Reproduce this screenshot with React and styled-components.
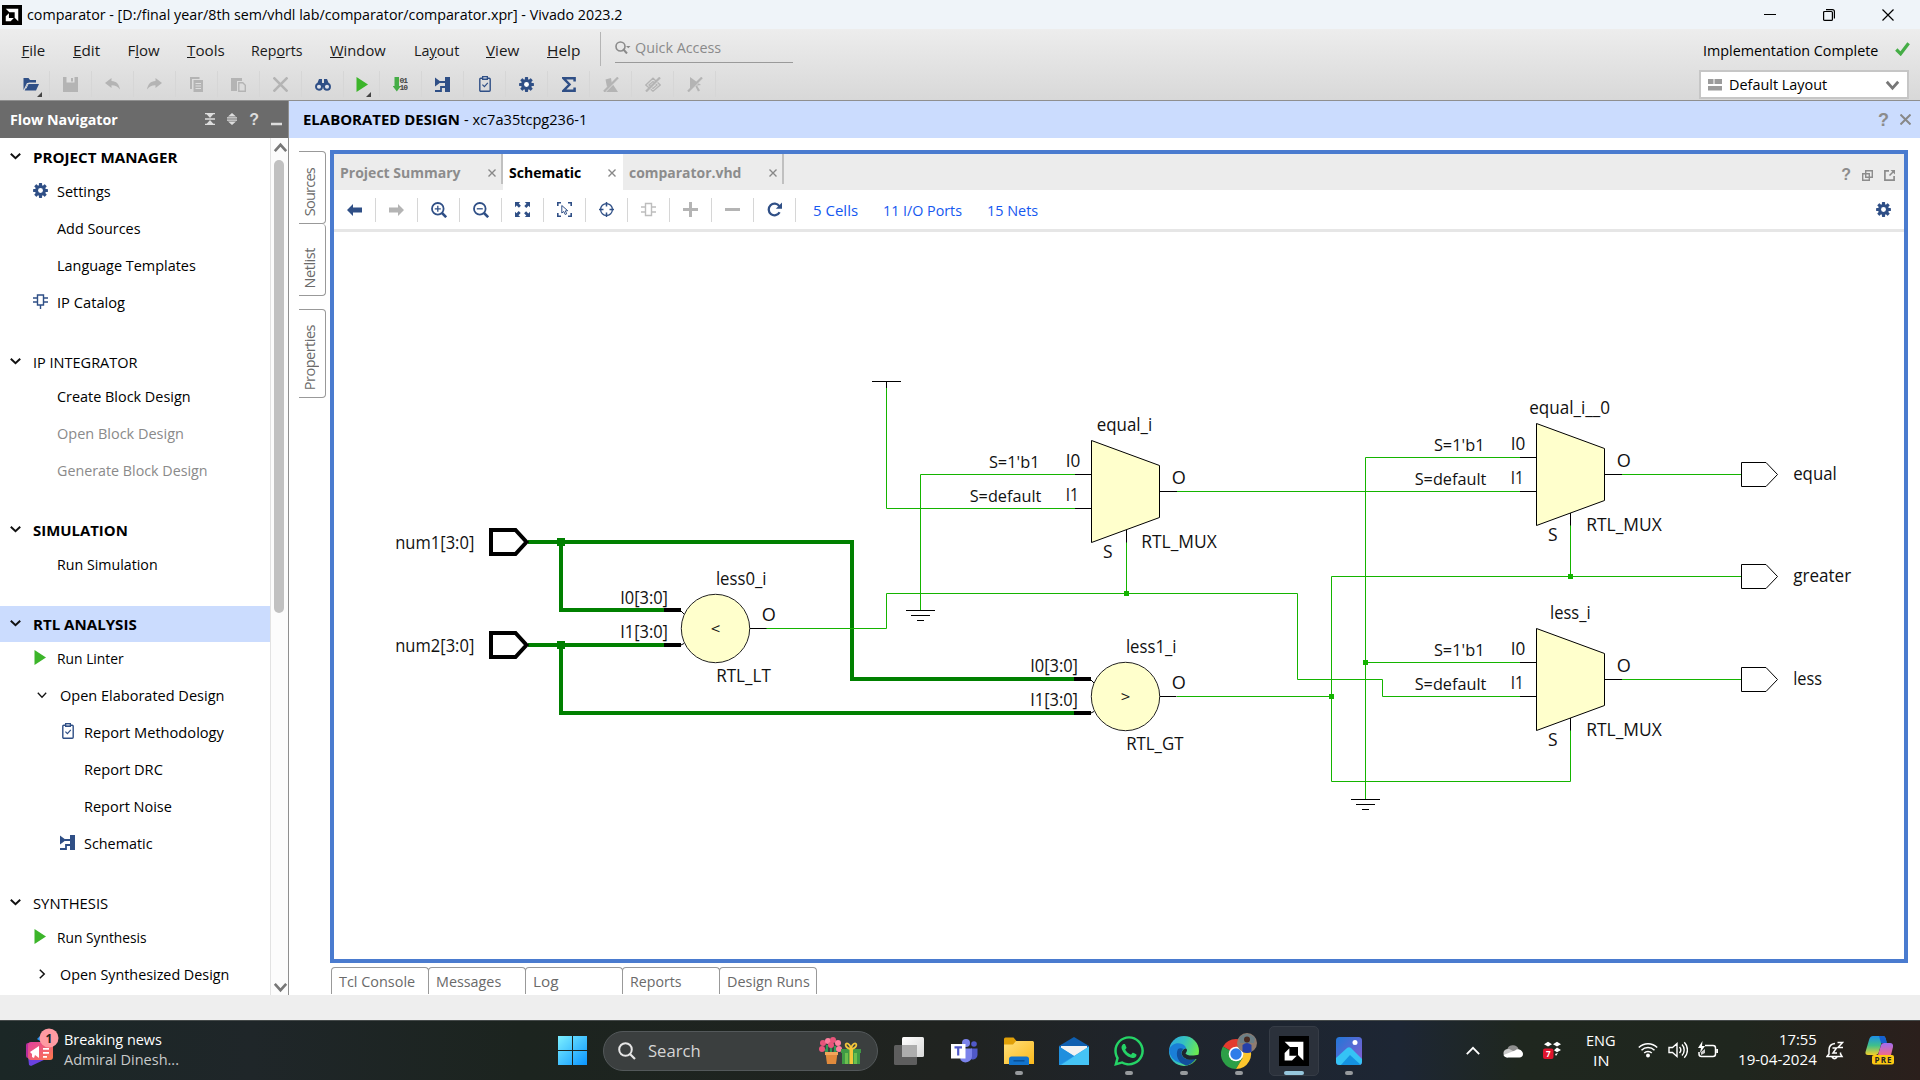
import React, { useLayoutEffect, useRef, useState } from "react";
import styled, { createGlobalStyle, css } from "styled-components";
import { FaWhatsapp } from "react-icons/fa";

const NAVY = "#2f4f86";
const OFF = "#b4b4b4";

const GlobalStyle = createGlobalStyle`
  * { box-sizing: border-box; }
  body {
    margin: 0;
    background: #fff;
    color: #000;
    font: 15px/20px "Open Sans", "Noto Sans", sans-serif;
    overflow: hidden;
  }
  svg { display: block; flex: none; }
`;

/* ---------- text that keeps a fixed advance width ---------- */

const FitBox = styled.span`
  display: inline-block;
  flex: none;
  width: ${(p) => p.$w}px;
  white-space: nowrap;
`;
const FitInner = styled.span`
  display: inline-block;
  transform-origin: 0 50%;
`;

function Fit({ w, dy = -1, children }) {
  const ref = useRef(null);
  const [scale, setScale] = useState(1);
  useLayoutEffect(() => {
    setScale(w / ref.current.offsetWidth);
  }, [w]);
  return (
    <FitBox $w={w}>
      <FitInner ref={ref} style={{ transform: `translateY(${dy}px) scaleX(${scale})` }}>
        {children}
      </FitInner>
    </FitBox>
  );
}

/* ---------- icons ---------- */

const Svg = ({ w = 15, h = w, box, children, ...p }) => (
  <svg width={w} height={h} viewBox={box || `0 0 ${w} ${h}`} {...p}>
    {children}
  </svg>
);

const AmdLogo = ({ size, bg = "#000" }) => (
  <Svg w={size} box="0 0 24 24">
    <path d="M0 0h24v24H0z" fill={bg} />
    <path d="M4.5 4.5h15v15l-4.3-4.3V8.8H8.8zM8.3 9.8v5.9h5.9l-3.8 3.8H4.5v-5.9z" fill="#fff" />
  </Svg>
);
const Gear = () => (
  <Svg box="-8 -8 16 16">
    {[0, 45, 90, 135].map((a) => (
      <rect key={a} x="-1.7" y="-7.9" width="3.4" height="15.8" rx=".6" fill={NAVY} transform={`rotate(${a})`} />
    ))}
    <circle r="4.2" fill="none" stroke={NAVY} strokeWidth="3.2" />
    <circle r="2.6" fill="#fff" />
  </Svg>
);
const Play = ({ w = 12, h = 15 }) => (
  <Svg w={w} h={h} box="0 0 12 15">
    <path d="M.5 0 12 7.5.5 15z" fill="#3cb52a" />
  </Svg>
);
const CHEVRONS = {
  down: (w, h) => `M.8 .8 L${w / 2} ${h - 0.8} L${w - 0.8} .8`,
  up: (w, h) => `M.8 ${h - 0.8} L${w / 2} .8 L${w - 0.8} ${h - 0.8}`,
  right: (w, h) => `M.8 .8 L${w - 0.8} ${h / 2} L.8 ${h - 0.8}`,
};
const Chevron = ({ dir = "down", w = 11, h = 6, c = "#111", sw = 2 }) => (
  <Svg w={w} h={h} overflow="visible">
    <path d={CHEVRONS[dir](w, h)} fill="none" stroke={c} strokeWidth={sw} />
  </Svg>
);
const Clipboard = () => (
  <Svg w={12} h={16}>
    <rect x=".8" y="2.3" width="10.4" height="12.9" rx="1" fill="none" stroke={NAVY} strokeWidth="1.4" />
    <path d="M3 0h6v4H3z" fill={NAVY} />
    <path d="M4.3 1.4h3.4v1H4.3z" fill="#fff" />
    <path d="M3.4 8.6 5.4 10.6 8.8 6.8" fill="none" stroke={NAVY} strokeWidth="1.2" />
  </Svg>
);
const SchematicIcon = () => (
  <Svg w={15} h={15}>
    <path d="M0 .5l6 4.5L0 9.500z M10 0h5v15h-5z" fill={NAVY} />
    <path d="M5 5h6M10 10H6v4H0" fill="none" stroke={NAVY} strokeWidth="1.8" />
  </Svg>
);
const IpChip = ({ c = NAVY, stem = true }) => (
  <Svg w={15} h={15}>
    <path d={`M4.500 ${stem ? "1h6v10h-6z" : "1.500h6v12h-6z"}M0 ${stem ? 4 : 5}h4M0 ${stem ? 8 : 10}h4M11 ${stem ? 4 : 5}h4M11 ${stem ? 8 : 10}h4${stem ? "M7.500 11v4" : ""}`} fill="none" stroke={c} strokeWidth="1.4" />
  </Svg>
);
const Cross = ({ s = 8, c = "#888", sw = 1.4 }) => (
  <Svg w={s}>
    <path d={`M.5 .5L${s - 0.5} ${s - 0.5}M${s - 0.5} .5L.5 ${s - 0.5}`} stroke={c} strokeWidth={sw} />
  </Svg>
);
const Check = () => (
  <Svg w={15} h={14}>
    <path d="M1.300 7.500 5.600 11.800 13.600 1.300" fill="none" stroke="#45ad46" strokeWidth="3.2" />
  </Svg>
);
const OpenFolder = () => (
  <Svg w={16} h={16}>
    <path d="M.500 14V2h5l1.500 2h6v3H4z" fill={NAVY} />
    <path d="M4.600 8H16l-3 6.500H1.700z" fill={NAVY} />
    <path d="M3 12.500 5.500 7H14" fill="none" stroke="#e0e0e0" strokeWidth=".9" />
  </Svg>
);
const Save = () => (
  <Svg w={15}>
    <path d="M0 0h15v15H0z" fill={OFF} />
    <path d="M3.500 0h8v5.500h-8z" fill="#e0e0e0" />
    <path d="M8 1h2v3.500H8z" fill={OFF} />
  </Svg>
);
const Undo = ({ flip }) => (
  <Svg w={15} h={12} transform={flip ? "scale(-1 1)" : undefined}>
    <path d="M0 5 6.500 0v3c5 .3 7.500 3 8.500 8.500C12.500 8.500 10.500 7.300 6.500 7.300V10z" fill={OFF} />
  </Svg>
);
const Copy = () => (
  <Svg w={15}>
    <path d="M1 0h9.500v2H3v10H1z" fill={OFF} />
    <path d="M4.500 3H14v12H4.500z" fill={OFF} />
    <path d="M6.500 6.500h5.500M6.500 9h5.500M6.500 11.500h5.500" stroke="#dedede" />
  </Svg>
);
const Paste = () => (
  <Svg w={15}>
    <path d="M0 1h11v3H6v10H0z" fill={OFF} />
    <path d="M7.800 5.800h4l2.500 2.500v6h-6.500z" fill="#dcdcdc" stroke={OFF} strokeWidth="1.4" />
  </Svg>
);
const Binoculars = () => (
  <Svg w={16} h={13}>
    <path d="M2 6 4 1h3v4h2V1h3l2 5z" fill={NAVY} />
    <circle cx="4" cy="8.800" r="3" fill="#dde1ea" stroke={NAVY} strokeWidth="1.9" />
    <circle cx="12" cy="8.800" r="3" fill="#dde1ea" stroke={NAVY} strokeWidth="1.9" />
    <path d="M7 5h2v4H7z" fill={NAVY} />
  </Svg>
);
const BitStyle = styled.text`
  font: bold 8px "Liberation Mono", monospace;
  fill: #444;
`;
const Bitstream = () => (
  <Svg w={15} h={16}>
    <path d="M1.500 1h4.500v9h2L3.800 15.500-.400 10h1.900z" fill="#45ad46" />
    <BitStyle x="6.500" y="7" textLength="8.500">01</BitStyle>
    <BitStyle x="6.500" y="14" textLength="8.500">10</BitStyle>
  </Svg>
);
const Sigma = () => (
  <Svg w={14} h={15}>
    <path d="M12.600 4.500V1.300H1.500L7.500 7.500 1.500 13.700h11.100V10.500" fill="none" stroke={NAVY} strokeWidth="2.500" />
  </Svg>
);
const Slashed = ({ kind }) => (
  <Svg w={16} h={15}>
    {kind === 0 && <path d="M.5 15 10 7.500 15 15zM2.500 2.500 8 1l1 6-5 3z" fill={OFF} />}
    {kind === 1 && <path d="M.8 8 8 1.200 15.200 8 8 14.200zM4 8l4-3.500L12 8l-4 3.500z" fill="none" stroke={OFF} strokeWidth="1.300" />}
    {kind === 2 && <path d="M3 0l11 8-4 .6 3 5-2 1-2.500-5L3 13z" fill={OFF} />}
    <path d="M2.500 14.500 15.500 1.500" stroke="#dadada" strokeWidth="1.500" />
    <path d="M1 14.500 15 .5" stroke={OFF} strokeWidth="2.200" />
  </Svg>
);
const LayoutIcon = () => (
  <Svg w={14} h={12}>
    <path d="M0 0h5.500v5H0zM6.500 0H14v5H6.500zM0 7h14v4.500H0z" fill="#9b9b9b" />
  </Svg>
);
const Arrow = ({ c, flip }) => (
  <Svg w={15} h={12} transform={flip ? "scale(-1 1)" : undefined}>
    <path d="M0 6 6 0v3.500h9v5H6V12z" fill={c} />
  </Svg>
);
const Zoom = ({ plus }) => (
  <Svg w={16}>
    <circle cx="6.800" cy="6.800" r="5.800" fill="none" stroke={NAVY} strokeWidth="1.800" />
    <path d={`M3.800 6.800h6${plus ? "M6.800 3.800v6" : ""}`} stroke={NAVY} strokeWidth="1.300" />
    <path d="M11 11l4.200 4.200" stroke={NAVY} strokeWidth="2.600" />
  </Svg>
);
const FitAll = () => (
  <Svg w={15} h={15}>
    {[0, 90, 180, 270].map((a) => (
      <path key={a} d="M0 0h5.200L3.700 1.500l2.200 2.200-2 2-2.200-2.200L0 5.200z" fill={NAVY} transform={`rotate(${a} 7.500 7.500)`} />
    ))}
  </Svg>
);
const FitSel = () => (
  <Svg w={15} h={15}>
    <path d="M.800 4V.800H4M11 .800h3.200V4M14.200 11v3.200H11M4 14.200H.800V11" fill="none" stroke={NAVY} strokeWidth="1.600" />
    <path d="M4.800 3.500v7.500l2-1.500 1.400 3 1.500-.7-1.400-2.900 2.400-.2z" fill="none" stroke={NAVY} />
  </Svg>
);
const Target = () => (
  <Svg w={15} h={15}>
    <circle cx="7.500" cy="7.500" r="5.900" fill="none" stroke={NAVY} strokeWidth="1.300" />
    <path d="M7.500 0v4.500M7.500 10.500V15M0 7.500h4.500M10.500 7.500H15" stroke={NAVY} strokeWidth="1.500" />
  </Svg>
);
const Plus = ({ minus }) => (
  <Svg w={15} h={15}>
    <path d={`M0 7.500h15${minus ? "" : "M7.500 0v15"}`} stroke={OFF} strokeWidth="3" />
  </Svg>
);
const Refresh = () => (
  <Svg w={15} h={15}>
    <path d="M12.300 4.200A5.800 5.800 0 1 0 12.600 10.300" fill="none" stroke={NAVY} strokeWidth="2.300" />
    <path d="M15 .500v6.200H8.800z" fill={NAVY} />
  </Svg>
);

/* ---------- window chrome ---------- */

const Screen = styled.div`
  width: 1920px;
  height: 1080px;
  display: flex;
  flex-direction: column;
  overflow: hidden;
`;
const TitleBar = styled.header`
  height: 29px;
  flex: none;
  display: flex;
  align-items: center;
  padding: 0 26px 0 2px;
  background: #eff4f9;
  gap: 5px;
`;
const WindowButtons = styled.div`
  margin-left: auto;
  display: flex;
  align-items: center;
  gap: 47px;
`;
const TopBars = styled.div`
  height: 72px;
  flex: none;
  display: flex;
  justify-content: space-between;
  background: linear-gradient(#ededed, #d8d8d8);
  border-bottom: 1px solid #8f8f8f;
`;
const Column = styled.div`
  display: flex;
  flex-direction: column;
`;
const MenuRow = styled.nav`
  height: 38px;
  display: flex;
  padding: 3px 0 0 21.500px;
`;
const MenuItems = styled.div`
  display: flex;
  align-items: center;
  padding-top: 4px;
  gap: 27.200px;
  width: 578.500px;
  color: #1a1a1a;
`;
const QuickAccess = styled.div`
  height: 34px;
  padding: 0 0 3px 14px;
  border-left: 1px solid #b5b5b5;
`;
const QuickField = styled.div`
  width: 178px;
  height: 31px;
  display: flex;
  align-items: center;
  gap: 4px;
  color: #8a8a8a;
  border-bottom: 1px solid #9a9a9a;
`;
const ToolRow = styled.div`
  display: flex;
  padding-left: 8px;
`;
const ToolCell = styled.div`
  width: ${(p) => (p.$narrow ? 36 : 42)}px;
  height: 26px;
  margin-top: 4px;
  padding-left: ${(p) => (p.$first ? 4 : 0)}px;
  display: flex;
  align-items: center;
  justify-content: center;
  border-right: 1px solid #d6d6d6;
  position: relative;
`;
const Corner = styled.i`
  position: absolute;
  right: ${(p) => (p.$narrow ? 8 : 7)}px;
  bottom: 0;
  border-left: 5px solid transparent;
  border-bottom: 5px solid #444;
`;
const StatusColumn = styled.div`
  width: 221px;
  padding: 10px 10px 0 0;
`;
const StatusLine = styled.div`
  display: flex;
  align-items: center;
  justify-content: space-between;
  padding-left: 4px;
  height: 22px;
  > svg { margin-top: -3px; }
`;
const Combo = styled.div`
  height: 29px;
  margin: 9px 1px 0 0;
  width: 210px;
  border: 2px solid #c6c6c6;
  background: #fff;
  display: flex;
  align-items: center;
  padding: 0 8px 0 7px;
  gap: 7px;
  > :last-child { margin-left: auto; }
`;

/* ---------- body ---------- */

const Body = styled.div`
  flex: none;
  height: 894px;
  display: flex;
`;
const Sidebar = styled.aside`
  width: 289px;
  flex: none;
  border-right: 1px solid #8f8f8f;
  display: flex;
  flex-direction: column;
`;
const NavHead = styled.div`
  height: 37px;
  flex: none;
  background: #6b6b6b;
  color: #fff;
  font-weight: 700;
  display: flex;
  align-items: center;
  padding: 0 6px 0 10px;
`;
const NavTools = styled.div`
  margin-left: auto;
  display: flex;
  align-items: center;
  gap: 12px;
`;
const NavBody = styled.div`
  flex: 1;
  min-height: 0;
  display: flex;
`;
const Tree = styled.div`
  flex: 1;
  padding-top: 1px;
  overflow: hidden;
`;
const Group = styled.section`
  margin-bottom: 23px;
`;
const GroupHead = styled.div`
  height: 36px;
  display: flex;
  align-items: center;
  gap: 12px;
  padding: 1px 0 0 9.500px;
  font-weight: ${(p) => (p.$bold ? 700 : 400)};
  background: ${(p) => (p.$on ? "#cbdcfe" : "none")};
  > svg { margin-top: -4px; }
`;
const Items = styled.div`
  margin-top: -2px;
`;
const Item = styled.div`
  height: 37px;
  display: flex;
  align-items: center;
  color: ${(p) => (p.$off ? "#8a8a8a" : "#000")};
  padding-left: ${(p) => ({ 1: 33, 2: 37, 3: 60 })[p.$level]}px;
`;
const IconSlot = styled.span`
  width: ${(p) => (p.$level === 2 ? 22.500 : 23.500)}px;
  padding-left: ${(p) => p.$inset || 0}px;
  flex: none;
  display: flex;
  margin-top: ${(p) => (p.$level === 2 ? -1 : -3)}px;
`;
const ScrollTrack = styled.div`
  width: 18px;
  background: #fcfcfc;
  border-left: 1px solid #e2e2e2;
  display: flex;
  flex-direction: column;
  align-items: center;
  padding: 6px 0 4px 1px;
`;
const Thumb = styled.div`
  width: 10px;
  height: 453px;
  margin: 8px 2px auto 0;
  border-radius: 5px;
  background: #c1c1c1;
`;
const Main = styled.main`
  flex: 1;
  display: flex;
  flex-direction: column;
`;
const DesignHead = styled.div`
  height: 37px;
  flex: none;
  background: #cbdcfe;
  display: flex;
  align-items: center;
  padding: 0 9px 0 14px;
  gap: 4px;
  b { font-weight: 700; }
`;
const HeadTools = styled.div`
  margin-left: auto;
  display: flex;
  align-items: center;
  gap: 11px;
`;
const HelpMark = styled.span`
  font: bold ${(p) => p.$s || 18}px/20px "Liberation Sans", Arial, sans-serif;
  color: ${(p) => p.$c || "#8c8c8c"};
`;
const Workspace = styled.div`
  flex: 1;
  display: flex;
  padding: 12px 12px 0 10px;
`;
const SideTabs = styled.div`
  width: 31px;
  flex: none;
  padding: 1px 0 0;
`;
const SideTab = styled.div`
  width: 27px;
  height: ${(p) => p.$h}px;
  margin-bottom: ${(p) => p.$gap || 0}px;
  border: 1px solid #999;
  border-left: 0;
  border-radius: 0 4px 4px 0;
  ${(p) => p.$joined && css`border-top: 0;`}
  color: #6a6a6a;
  display: flex;
  align-items: flex-end;
  padding: 0 0 7px 0;
  font-size: 14.500px;
`;
const SideTabText = styled.span`
  writing-mode: vertical-rl;
  transform: rotate(180deg);
  line-height: 22px;
  letter-spacing: ${(p) => p.$ls}px;
`;
const Center = styled.div`
  flex: 1;
  display: flex;
  flex-direction: column;
`;
const Editor = styled.div`
  height: 813px;
  border: 4px solid #4a7bcf;
  display: flex;
  flex-direction: column;
`;
const TabStrip = styled.div`
  height: 36px;
  flex: none;
  background: #ececec;
  display: flex;
  align-items: flex-start;
`;
const Tab = styled.div`
  width: ${(p) => p.$w}px;
  height: ${(p) => (p.$on ? 36 : 30)}px;
  padding: 8px ${(p) => (p.$on ? 7 : 5)}px 0 6px;
  display: flex;
  justify-content: space-between;
  font-weight: 700;
  color: ${(p) => (p.$on ? "#000" : "#8c8c8c")};
  background: ${(p) => (p.$on ? "#fff" : "none")};
  border-right: ${(p) => (p.$sep ? "2px solid #c0c0c0" : "0")};
  > svg { margin-top: 7px; }
`;
const StripTools = styled.div`
  margin: 11px 9px 0 auto;
  display: flex;
  align-items: center;
  gap: 11px;
`;
const SchToolbar = styled.div`
  height: 42px;
  flex: none;
  border-bottom: 3px solid #e6e6e6;
  display: flex;
  align-items: center;
  padding-right: 13px;
  > :last-child { margin-left: auto; }
`;
const SchCell = styled.div`
  width: 42px;
  height: 24px;
  flex: none;
  display: flex;
  align-items: center;
  justify-content: center;
  border-right: 1px solid #d6d6d6;
`;
const Links = styled.div`
  display: flex;
  gap: 25px;
  padding: 3px 0 0 17px;
  color: #1558f0;
`;
const BottomTabs = styled.div`
  display: flex;
  margin: 4px 0 0 1px;
`;
const BottomTab = styled.div`
  width: 98px;
  height: 27px;
  margin-right: -1px;
  border: 1px solid #999;
  border-bottom: 0;
  border-radius: 4px 4px 0 0;
  padding: 4px 0 0 7px;
  color: #6a6a6a;
`;
const StatusStrip = styled.div`
  height: 25px;
  flex: none;
  background: #eee;
`;

/* ---------- schematic ---------- */

const SchText = styled.text`
  font: ${(p) => p.$s || 17.500}px "Open Sans", "Noto Sans", sans-serif;
  fill: #111;
`;
const T = ({ x, x2, y, s, children }) => (
  <SchText x={x - 0.8} y={y} $s={s} textLength={x2 - x + 1.6} lengthAdjust="spacingAndGlyphs">
    {children}
  </SchText>
);
const Bus = (p) => <path fill="none" stroke="#008000" strokeWidth="4" {...p} />;
const Wire = (p) => <path fill="none" stroke="#14b400" strokeWidth="1" {...p} />;
const Pin = (p) => <path fill="none" stroke="#000" strokeWidth="1" {...p} />;
const Dot = ({ x, y, s = 5, c = "#14b400" }) => <rect x={x - s / 2} y={y - s / 2} width={s} height={s} fill={c} />;

const Mux = ({ x, y, select, name, nx, nx2 }) => (
  <g>
    <path d={`M${x} ${y}l68 25v52l-68 25z`} fill="#ffffcc" stroke="#000" />
    <Pin d={`M${x - 16.500} ${y + 34}h16M${x - 16.500} ${y + 68}h16M${x + 68} ${y + 51}h17.500M${select} ${y + 89.500}v12.500`} />
    <T x={nx} x2={nx2} y={y - 9.500}>{name}</T>
    <T x={x - 101.800} x2={x - 52.800} y={y + 27.700} s={16.500}>S=1'b1</T>
    <T x={x - 121} x2={x - 51} y={y + 61.400} s={16.500}>S=default</T>
    <T x={x - 25} x2={x - 12} y={y + 26.500}>I0</T>
    <T x={x - 25} x2={x - 13.500} y={y + 60.800}>I1</T>
    <T x={x + 81} x2={x + 93.500} y={y + 43.700}>O</T>
    <T x={x + 12.200} x2={x + 20.200} y={y + 117.700}>S</T>
    <T x={x + 50.500} x2={x + 124.500} y={y + 107.700}>RTL_MUX</T>
  </g>
);
const Compare = ({ x, y, in1, name, type, sign, tx2 }) => (
  <g>
    <circle cx={x} cy={y} r="34.200" fill="#ffffcc" stroke="#222" />
    <Pin d={`M${x + 34.500} ${y}h16.500M${x - 34.500} ${in1 + 1}l3 3M${x - 34.500} ${y + 16.500}l3 -1.500`} />
    <T x={x + 1.200} x2={x + 50.300} y={y - 43.300}>{name}</T>
    <T x={x - 94.500} x2={x - 48.300} y={y - 24.800}>I0[3:0]</T>
    <T x={x - 94.500} x2={x - 48.300} y={y + 9.300}>I1[3:0]</T>
    <T x={x + 47} x2={x + 59.500} y={y - 7.400}>O</T>
    <T x={x + 1.500} x2={tx2} y={y + 53.600}>{type}</T>
    <T x={x - 4} x2={x + 4} y={y + 5} s={14}>{sign}</T>
  </g>
);
const Ground = ({ x, y }) => <Pin d={`M${x - 14.500} ${y}h29M${x - 9.500} ${y + 5}h19M${x - 3.500} ${y + 10}h7`} />;
const InPort = ({ y, name }) => (
  <g>
    <path d={`M491 ${y - 12}h24.500l11 12-11 12H491z`} fill="#fff" stroke="#000" strokeWidth="4" />
    <T x={396} x2={473.500} y={y + 6.600}>{name}</T>
  </g>
);
const OutPort = ({ y, x2, name }) => (
  <g>
    <path d={`M1741.500 ${y - 12}h24.500l11.500 12-11.500 12h-24.500z`} fill="#fff" stroke="#000" />
    <T x={1794} x2={x2} y={y + 5.800}>{name}</T>
  </g>
);

const Schematic = () => (
  <svg width="1570" height="727" viewBox="334 232 1570 727">
    <Bus d="M528 542H852V679H1074M561 542V610H664M528 645H664M561 645V713H1074" />
    <Dot x={561} y={542} s={8} c="#008000" />
    <Dot x={561} y={645} s={8} c="#008000" />
    <path d="M664 610h17M664 645h17M1074 679h17M1074 713h17" stroke="#000" strokeWidth="4" />
    <Wire d="M766 628.500H886.500V593.500H1297.500V679.500H1382.500V696.500H1520" />
    <Wire d="M886.500 388V508.500H1075.500M1075.500 474.500H920.500V610" />
    <Wire d="M1126.500 542V593.500M1177 491.500H1520M1177 696.500H1331.500" />
    <Wire d="M1741.500 576.500H1331.500V781.500H1570.500V730M1570.500 525V576.500" />
    <Wire d="M1520 457.500H1365.500V799M1365.500 662.500H1520" />
    <Wire d="M1621 474.500H1741M1621 679.500H1741" />
    <Dot x={1126.5} y={593.5} />
    <Dot x={1331.5} y={696.5} />
    <Dot x={1570.5} y={576.5} />
    <Dot x={1365.5} y={662.5} />
    <Pin d="M872 381.500h29M886.500 381.500V388" />
    <Ground x={920.5} y={610.5} />
    <Ground x={1365.5} y={799.5} />
    <Compare x={715.5} y={628.5} in1={610} name="less0_i" type="RTL_LT" tx2={770} sign="<" />
    <Compare x={1125.5} y={696.5} in1={679} name="less1_i" type="RTL_GT" tx2={1182.7} sign=">" />
    <Mux x={1091.5} y={440.5} select={1126.5} name="equal_i" nx={1097.5} nx2={1151.5} />
    <Mux x={1536.5} y={423.5} select={1570.5} name="equal_i__0" nx={1530} nx2={1609.3} />
    <Mux x={1536.5} y={628.5} select={1570.5} name="less_i" nx={1550.8} nx2={1589.8} />
    <InPort y={542} name="num1[3:0]" />
    <InPort y={645} name="num2[3:0]" />
    <OutPort y={474.5} x2={1836} name="equal" />
    <OutPort y={576.5} x2={1850.4} name="greater" />
    <OutPort y={679.5} x2={1821.3} name="less" />
  </svg>
);

/* ---------- taskbar ---------- */

const Taskbar = styled.footer`
  height: 60px;
  flex: none;
  display: flex;
  align-items: center;
  border-top: 1px solid #454a4a;
  color: #fff;
  background: linear-gradient(90deg, #1b2726 0, #1f2629 250px, #1c241f 520px, #202320 950px, #1f242c 1150px, #1d2634 1400px, #1f271f 1520px, #1f261e 1740px, #2b1f1c 1920px);
`;
const News = styled.div`
  width: 558px;
  padding-left: 25px;
  display: flex;
  align-items: center;
  gap: 4.500px;
`;
const TwoLines = styled.div`
  display: flex;
  flex-direction: column;
  align-items: ${(p) => p.$align || "flex-start"};
  line-height: 20px;
  > :last-child { color: ${(p) => p.$second || "#fff"}; }
`;
const SearchPill = styled.div`
  width: 275px;
  height: 40px;
  margin-left: 16px;
  padding: 0 15px 0 14px;
  display: flex;
  align-items: center;
  gap: 12px;
  border-radius: 20px;
  border: 1px solid #53585a;
  background: #3b3f3f;
  color: #d6d6d6;
  font-size: 16px;
  > :last-child { margin-left: auto; }
`;
const Apps = styled.div`
  display: flex;
  margin-left: 3.500px;
`;
const AppSlot = styled.div`
  width: 50px;
  height: 50px;
  margin: 0 2.500px;
  display: flex;
  align-items: center;
  justify-content: center;
  position: relative;
  border-radius: 5px;
  ${(p) => p.$on && css`background: #2b313b; border: 1px solid #363c46;`}
  &::after {
    content: "";
    position: absolute;
    bottom: ${(p) => (p.$on ? 0 : 1)}px;
    width: ${(p) => (p.$on ? 20 : 8)}px;
    height: 4px;
    border-radius: 2px;
    background: ${(p) => (p.$on ? "#96c6dc" : p.$run ? "#979a9d" : "transparent")};
  }
`;
const Tray = styled.div`
  margin-left: auto;
  padding-right: 25px;
  display: flex;
  align-items: center;
`;
const TraySlot = styled.div`
  margin-right: ${(p) => p.$r}px;
`;
const TinyText = styled.text`
  font: bold ${(p) => p.$s}px "Open Sans", "Noto Sans", sans-serif;
  fill: ${(p) => p.fill};
`;

const NewsIcon = () => (
  <Svg w={34} h={46}>
    <defs>
      <linearGradient id="nw" x1="0" y1="0" x2="1" y2="1">
        <stop offset="0" stopColor="#e0409f" />
        <stop offset="1" stopColor="#ff7b4a" />
      </linearGradient>
    </defs>
    <path d="M3 28l19-1 1 3-17 8-2-1z" fill="#6a42e0" />
    <path d="M12 11l6-6v10z" fill="#1e90f0" />
    <rect x="1" y="15" width="13" height="15" rx="2" fill="#b52c9a" />
    <rect x="3" y="14" width="25" height="18" rx="3" fill="url(#nw)" />
    <path d="M5 24l9-6v12l-4-3-1 3-2-1v-3zM18 24h6v1.800h-6zM18 28h4v1.800h-4zM18 20h6v1.800h-6z" fill="#fff" />
    <circle cx="24" cy="10" r="9.500" fill="#ff9aa2" />
    <TinyText $s={12} x="20.500" y="14.500" fill="#222">1</TinyText>
  </Svg>
);
const WinLogo = () => (
  <Svg w={29} h={29}>
    <defs>
      <linearGradient id="wl" x1="0" y1="0" x2="1" y2="1">
        <stop offset="0" stopColor="#7df0ff" />
        <stop offset="1" stopColor="#0a95ff" />
      </linearGradient>
    </defs>
    <path d="M0 0h14v14H0zM15 0h14v14H15zM0 15h14v14H0zM15 15h14v14H15z" fill="url(#wl)" />
  </Svg>
);
const Flowers = () => (
  <Svg w={43} h={28}>
    <path d="M8 19V8M12 19V6M16 19V9M10 17 4 11M14 17l5-6" stroke="#2e9a55" strokeWidth="2" />
    {[[4, 6], [9, 4], [14, 3], [19, 6], [3, 12], [20, 12], [12, 8]].map(([x, y], i) => (
      <circle key={i} cx={x} cy={y} r="3" fill={i % 2 ? "#ff7f9f" : "#e8557b"} />
    ))}
    <path d="M6.500 16h12l-1.500 11H8z" fill="#e08a3c" />
    <path d="M6 15h13v3H6z" fill="#f2a55a" />
    <path d="M22 12h20v4H22zM23 16h18v11H23z" fill="#3f9a45" />
    <path d="M26 16h3v11h-3zM35 16h3v11h-3z" fill="#6cbf4e" />
    <path d="M30.500 12h3.500v15h-3.500z" fill="#f4c63a" />
    <path d="M32 12c-6-1-6-5-4.500-5.500S32 9 32 12c0-3 3-6 4.500-5.500S38 11 32 12z" fill="none" stroke="#f4c63a" strokeWidth="1.800" />
  </Svg>
);
const TaskView = () => (
  <Svg w={30} h={28}>
    <defs>
      <linearGradient id="tv" x1="0" y1="0" x2="1" y2="1">
        <stop offset="0" stopColor="#fff" />
        <stop offset="1" stopColor="#d9d9d9" />
      </linearGradient>
    </defs>
    <rect x="8" width="22" height="20" rx="1.500" fill="url(#tv)" />
    <rect y="8" width="23" height="20" rx="1.500" fill="#5e5e5e" />
    <path d="M8 8h15v12H8z" fill="#adadad" />
  </Svg>
);
const Teams = () => (
  <Svg w={27} h={24}>
    <circle cx="15" cy="4" r="4" fill="#7b83eb" />
    <circle cx="23" cy="5" r="2.800" fill="#5059c9" />
    <path d="M20 9.500h6.500V16a4.500 4.500 0 0 1-6.500 4z" fill="#5059c9" />
    <path d="M9 9.500h12V17a6.500 6.500 0 0 1-11.500 4z" fill="#7b83eb" />
    <path d="M0 5h14.500v14.500H0z" fill="#fff" />
    <path d="M3.500 8.300h7.500M7.200 8.300v8.200" stroke="#5059c9" strokeWidth="2.200" />
  </Svg>
);
const Explorer = () => (
  <Svg w={30} h={28}>
    <defs>
      <linearGradient id="ex" x1="0" y1="0" x2="1" y2="1">
        <stop offset="0" stopColor="#ffe07a" />
        <stop offset="1" stopColor="#fbb91c" />
      </linearGradient>
    </defs>
    <path d="M0 2q0-1.500 1.500-1.500h8l3 3.500H29v8H0z" fill="#e0a008" />
    <path d="M0 7.500h9l3-3.500h16.500Q30 4 30 5.500V27H0z" fill="url(#ex)" />
    <path d="M5 28v-6q0-2.500 2.500-2.500h15Q25 19.500 25 22v6z" fill="#1273cc" />
    <path d="M9.500 23.800h11" stroke="#0a4f94" strokeWidth="1.500" />
  </Svg>
);
const Mail = () => (
  <Svg w={30} h={28}>
    <path d="M0 9 15 0l15 9v4H0z" fill="#0f5fb0" />
    <path d="M2 9h26v10H2z" fill="#f2f2f2" />
    <path d="M0 9.500 15 19 30 9.500V28H0z" fill="#2a9fe8" />
    <path d="M30 9.500V28H2z" fill="#4fd0fa" opacity=".75" />
    <path d="M0 9.500 15 19 0 28z" fill="#1f8fde" />
  </Svg>
);
const Edge = () => (
  <Svg w={30} h={30}>
    <defs>
      <linearGradient id="eg" x1="0" y1="0" x2="1" y2=".4">
        <stop offset="0" stopColor="#2ba7e6" />
        <stop offset=".5" stopColor="#35c1c0" />
        <stop offset="1" stopColor="#6bea50" />
      </linearGradient>
    </defs>
    <circle cx="15" cy="15" r="15" fill="url(#eg)" />
    <path d="M0 14C2 8 8 6 13 8c3 1.300 4 3 4 5-3-1-5 1-5 4 0 5 6 8 14 5.500A15 15 0 0 1 0 14z" fill="#1a7fd8" />
    <path d="M9 13c-3 6 0 14 8 16.500 4-.5 8-3.500 10-7-7 3-14 0-14.500-5 0-2 .6-3.500 2-4.500-2-1-4-1-5.500 0z" fill="#124f9c" />
    <path d="M17 12.500c2 1.500.5 3.500-.5 5 1 2 7 3 13.500 1l1-1v6l-4-.5c-6 2-13 0-14.300-5 0-2.500 1-5 4.300-5.500z" fill="#1f242e" />
  </Svg>
);
const Chrome = () => (
  <Svg w={36} h={36}>
    <path d="M15 21 2 13.500A15 15 0 0 1 28 13.500z" fill="#e33b2e" />
    <path d="M15 21 2 13.500A15 15 0 0 0 15 36l6.500-11z" fill="#2c9f47" />
    <path d="M15 21l6.500 4L15 36A15 15 0 0 0 28 13.500H15z" fill="#fcc62d" />
    <path d="M15 13.500H28a15 15 0 0 0-2.500-3.300L9 9z" fill="#e33b2e" />
    <circle cx="15" cy="21" r="7.300" fill="#fff" />
    <circle cx="15" cy="21" r="5.700" fill="#2f7de9" />
    <circle cx="26" cy="10" r="10" fill="#8f7c70" />
    <path d="M18 5q8-8 16 0l-1 5H19z" fill="#6c7f86" />
    <circle cx="26" cy="6.500" r="3" fill="#4a2b22" />
    <path d="M21.500 19V12q4.500-4 9 0v7q-4.500 2-9 0z" fill="#2540a8" />
  </Svg>
);
const Photos = () => (
  <Svg w={26} h={30}>
    <defs>
      <linearGradient id="ph" x1="0" y1="0" x2="1" y2="1">
        <stop offset="0" stopColor="#1f78d8" />
        <stop offset="1" stopColor="#8a5bd0" />
      </linearGradient>
      <clipPath id="pc"><rect y="1" width="26" height="28" rx="3.500" /></clipPath>
    </defs>
    <g clipPath="url(#pc)">
      <path d="M0 0h26v30H0z" fill="url(#ph)" />
      <path d="M0 22 11 12q2-1.500 4 0l11 11v7H0z" fill="#35c3f5" />
      <path d="M14 19 26 30H4z" fill="#1592e0" />
    </g>
    <circle cx="19" cy="6.500" r="2.500" fill="#fff" />
  </Svg>
);
const Cloud = () => (
  <Svg w={20} h={14}>
    <path d="M4 6.500A6 6 0 0 1 15.500 5l-4 5z" fill="#8f8f8f" />
    <path d="M4.500 13.500a4.300 4.300 0 0 1 .5-8.600c3 0 4 2 8 4z" fill="#c9c9c9" />
    <path d="M4 13.500c-1.500 0-3-1-3.500-2.500L12 6.500c3-3 8 0 8 3.500 0 2-1.500 3.500-3.500 3.500z" fill="#fff" />
  </Svg>
);
const Dropbox = () => (
  <Svg w={19} h={20}>
    <path d="M5 .800 9 3.200 5 5.600 1 3.200zM14 .800l4 2.400-4 2.400-4-2.400zM14 6.500l4 2.400-4 2.400-3-2zM12 13l3-1-2 3z" fill="#fff" />
    <rect y="7.500" width="10.500" height="10.500" rx="2" fill="#e0142d" />
    <TinyText $s={8} x="3" y="15.800" fill="#fff">7</TinyText>
  </Svg>
);
const Wifi = () => (
  <Svg w={20} h={18} fill="none" stroke="#fff" strokeWidth="1.500">
    <path d="M.800 5.500a13 13 0 0 1 18.400 0M3.500 8.300a9.200 9.200 0 0 1 13 0M6.200 11a5.400 5.400 0 0 1 7.600 0" />
    <circle cx="10" cy="13.500" r="1.200" fill="#fff" />
  </Svg>
);
const Volume = () => (
  <Svg w={20} h={19} fill="none" stroke="#fff" strokeWidth="1.400">
    <path d="M1 6.500h3.500L9 2.500v13l-4.500-4H1zM11.500 6a4.500 4.500 0 0 1 0 6M14 3.500a8 8 0 0 1 0 11M16.300 1.200a11.300 11.300 0 0 1 0 15.600" />
  </Svg>
);
const Battery = () => (
  <Svg w={20} h={20}>
    <path d="M7 4.500h8q2.500 0 2.500 2.500v6q0 2.500-2.500 2.500H3.500Q1 15.500 1 13v-2" fill="none" stroke="#fff" strokeWidth="1.500" />
    <path d="M18.200 8h1.800v4h-1.800zM4.500 0 0 7h3l-1 5 5-7H4z" fill="#fff" />
    <path d="M3 14V11l4-3v4z" fill="#cfcfcf" />
  </Svg>
);
const Bell = () => (
  <Svg w={18} h={20} fill="none" stroke="#fff" strokeWidth="1.500">
    <path d="M9 2.500Q3 3 3 9v4l-2 2.500h15L14.500 13v-1.500M6 16q2.500 3.500 5 0" />
    <path d="M11.500 1.500h5L12 6.500h5M6.500 7h4L7 12h4" />
  </Svg>
);
const Copilot = () => (
  <Svg w={30} h={29}>
    <defs>
      <linearGradient id="c1" x1="0" y1="0" x2="0" y2="1">
        <stop offset="0" stopColor="#1d8fe8" />
        <stop offset=".5" stopColor="#3fc08a" />
        <stop offset="1" stopColor="#f5cf2a" />
      </linearGradient>
      <linearGradient id="c2" x1="0" y1="0" x2="0" y2="1">
        <stop offset="0" stopColor="#a06cf0" />
        <stop offset="1" stopColor="#f06a8a" />
      </linearGradient>
    </defs>
    <path d="M8 0h10q2 0 2.500 2l1 4-5 1-3 10q-1 2-3 2H3q-3 0-2.500-3L4 4q1-4 4-4z" fill="url(#c1)" />
    <path d="M18 0q2 0 2.500 2l1.500 5h-6l-2-7z" fill="#1560d0" />
    <path d="M19 7h6q3.500 0 3 4l-2 8H13l3-10q.8-2 3-2z" fill="url(#c2)" />
    <rect x="7" y="19" width="22" height="9.500" rx="2" fill="#fcc812" />
    <TinyText $s={8} x="9.500" y="26.600" fill="#222" textLength="17">PRE</TinyText>
  </Svg>
);

/* ---------- data ---------- */

const MENUS = [
  ["", "F", "ile", 24], ["", "E", "dit", 27.500], ["F", "l", "ow", 32], ["", "T", "ools", 37.500], ["Rep", "o", "rts", 52],
  ["", "W", "indow", 56], ["La", "y", "out", 45], ["", "V", "iew", 33.500], ["", "H", "elp", 33],
];
const MAIN_TOOLS = [
  <OpenFolder />, <Save />, <Undo />, <Undo flip />, <Copy />, <Paste />, <Cross s={15} c={OFF} sw={2.6} />, <Binoculars />,
  <Play />, <Bitstream />, <SchematicIcon />, <Clipboard />, <Gear />, <Sigma />, <Slashed kind={0} />, <Slashed kind={1} />, <Slashed kind={2} />,
];
const SCH_TOOLS = [
  <Arrow c={NAVY} />, <Arrow c={OFF} flip />, <Zoom plus />, <Zoom />, <FitAll />, <FitSel />, <Target />,
  <IpChip c="#bdbdbd" stem={false} />, <Plus />, <Plus minus />, <Refresh />,
];
const FLOW = [
  { t: "PROJECT MANAGER", w: 144.5, bold: true, items: [
    { t: "Settings", w: 54, icon: <Gear /> }, { t: "Add Sources", w: 83.5 },
    { t: "Language Templates", w: 138.5 }, { t: "IP Catalog", w: 68.5, icon: <IpChip /> } ] },
  { t: "IP INTEGRATOR", w: 104.5, items: [
    { t: "Create Block Design", w: 133.5 }, { t: "Open Block Design", w: 126.5, off: true }, { t: "Generate Block Design", w: 150.5, off: true } ] },
  { t: "SIMULATION", w: 94.5, bold: true, items: [{ t: "Run Simulation", w: 100.5 }] },
  { t: "RTL ANALYSIS", w: 103.5, bold: true, on: true, items: [
    { t: "Run Linter", w: 66.5, icon: <Play />, inset: 1 },
    { t: "Open Elaborated Design", w: 164.5, level: 2, icon: <Chevron w={10} sw={1.3} /> },
    { t: "Report Methodology", w: 139.5, level: 3, icon: <Clipboard />, inset: 1.5 },
    { t: "Report DRC", w: 79, level: 3 }, { t: "Report Noise", w: 88, level: 3 },
    { t: "Schematic", w: 69, level: 3, icon: <SchematicIcon /> } ] },
  { t: "SYNTHESIS", w: 75, items: [
    { t: "Run Synthesis", w: 90, icon: <Play />, inset: 1 },
    { t: "Open Synthesized Design", w: 169, level: 2, icon: <Chevron dir="right" w={6} h={10} sw={1.5} />, inset: 2 } ] },
];
const APPS = [
  [<TaskView />], [<Teams />], [<Explorer />, true], [<Mail />], [<FaWhatsapp size={34} color="#25d366" />, true],
  [<Edge />, true], [<Chrome />, true], [<AmdLogo size={30} />, true, true], [<Photos />, true],
];

export default function App() {
  return (
    <Screen>
      <GlobalStyle />
      <TitleBar>
        <AmdLogo size={20} />
        <Fit w={595}>comparator - [D:/final year/8th sem/vhdl lab/comparator/comparator.xpr] - Vivado 2023.2</Fit>
        <WindowButtons>
          <Svg w={12} h={12}><path d="M0 5.500h12" stroke="#000" /></Svg>
          <Svg w={12} h={12}>
            <path d="M.600 3.500q0-1 1-1h6.800q1 0 1 1v6.900q0 1-1 1H1.600q-1 0-1-1zM3 .600h6.400q2 0 2 2V9.500" fill="none" stroke="#000" strokeWidth="1.200" />
          </Svg>
          <Cross s={12} c="#000" sw={1.2} />
        </WindowButtons>
      </TitleBar>

      <TopBars>
        <Column>
          <MenuRow>
            <MenuItems>
              {MENUS.map(([a, u, b, w]) => (
                <Fit key={a + u + b} w={w} dy={-2}>{a}<u>{u}</u>{b}</Fit>
              ))}
            </MenuItems>
            <QuickAccess>
              <QuickField>
                <Svg w={16} h={13}>
                  <circle cx="5.500" cy="5.500" r="4.500" fill="none" stroke="#8a8a8a" strokeWidth="1.600" />
                  <path d="M8 8l4 4.500" stroke="#8a8a8a" strokeWidth="2" />
                  <path d="M11 5h4.500l-2.200 2.300z" fill="#8a8a8a" />
                </Svg>
                <Fit w={86} dy={0}>Quick Access</Fit>
              </QuickField>
            </QuickAccess>
          </MenuRow>
          <ToolRow>
            {MAIN_TOOLS.map((icon, i) => (
              <ToolCell key={i} $first={i === 0} $narrow={i === 8}>
                {icon}
                {(i === 0 || i === 8) && <Corner $narrow={i === 8} />}
              </ToolCell>
            ))}
          </ToolRow>
        </Column>
        <StatusColumn>
          <StatusLine>
            <Fit w={175} dy={-0.5}>Implementation Complete</Fit>
            <Check />
          </StatusLine>
          <Combo>
            <LayoutIcon />
            <Fit w={98}>Default Layout</Fit>
            <Chevron w={13} h={8} c="#777" sw={2.8} />
          </Combo>
        </StatusColumn>
      </TopBars>

      <Body>
        <Sidebar>
          <NavHead>
            <Fit w={107.5}>Flow Navigator</Fit>
            <NavTools>
              <Svg w={10} h={14}><path d="M0 .700h10M0 11.300h10M0 6h10" stroke="#ddd" strokeWidth="1.300" /><path d="M1.500 1h7L5 5zM1.500 11h7L5 7z" fill="#ddd" /></Svg>
              <Svg w={10} h={14}><path d="M5 0l4 3.500H1zM5 12l4-3.500H1z" fill="#ddd" /><path d="M0 4.800h10M0 7.200h10" stroke="#ddd" strokeWidth="1.300" /></Svg>
              <HelpMark $s={16} $c="#ddd">?</HelpMark>
              <Svg w={11} h={12}><path d="M0 10h11" stroke="#ddd" strokeWidth="2.500" /></Svg>
            </NavTools>
          </NavHead>
          <NavBody>
            <Tree>
              {FLOW.map((g) => (
                <Group key={g.t}>
                  <GroupHead $bold={g.bold} $on={g.on}>
                    <Chevron />
                    <Fit w={g.w}>{g.t}</Fit>
                  </GroupHead>
                  <Items>
                    {g.items.map((it) => (
                      <Item key={it.t} $level={it.level || 1} $off={it.off}>
                        <IconSlot $level={it.level || 1} $inset={it.inset}>{it.icon}</IconSlot>
                        <Fit w={it.w}>{it.t}</Fit>
                      </Item>
                    ))}
                  </Items>
                </Group>
              ))}
            </Tree>
            <ScrollTrack>
              <Chevron dir="up" w={13} h={8} c="#777" sw={2.6} />
              <Thumb />
              <Chevron w={13} h={8} c="#777" sw={2.6} />
            </ScrollTrack>
          </NavBody>
        </Sidebar>

        <Main>
          <DesignHead>
            <Fit w={156.5}><b>ELABORATED DESIGN</b></Fit>
            <Fit w={123.5}>- xc7a35tcpg236-1</Fit>
            <HeadTools>
              <HelpMark>?</HelpMark>
              <Cross s={11} sw={2} />
            </HeadTools>
          </DesignHead>
          <Workspace>
            <SideTabs>
              <SideTab $h={73}><SideTabText $ls={-0.75}>Sources</SideTabText></SideTab>
              <SideTab $h={72} $gap={13} $joined><SideTabText $ls={-0.45}>Netlist</SideTabText></SideTab>
              <SideTab $h={89}><SideTabText $ls={-0.5}>Properties</SideTabText></SideTab>
            </SideTabs>
            <Center>
              <Editor>
                <TabStrip>
                  <Tab $w={169} $sep><Fit w={120.5} dy={0}>Project Summary</Fit><Cross /></Tab>
                  <Tab $w={120} $on><Fit w={72} dy={0}>Schematic</Fit><Cross /></Tab>
                  <Tab $w={161} $sep><Fit w={112.5} dy={0}>comparator.vhd</Fit><Cross /></Tab>
                  <StripTools>
                    <HelpMark $s={16}>?</HelpMark>
                    <Svg w={11} h={11}><path d="M3.700.700h6.600v6.600H3.700zM.700 3.700h6.600v6.600H.700z" fill="none" stroke="#8c8c8c" strokeWidth="1.400" /></Svg>
                    <Svg w={11} h={11}><path d="M5 .900H.900v9.200h9.200V6" fill="none" stroke="#8c8c8c" strokeWidth="1.700" /><path d="M11 0v4.500L6.500 0z" fill="#8c8c8c" /><path d="M9.500 1.500 5.500 5.500" stroke="#8c8c8c" strokeWidth="1.600" /></Svg>
                  </StripTools>
                </TabStrip>
                <SchToolbar>
                  {SCH_TOOLS.map((icon, i) => <SchCell key={i}>{icon}</SchCell>)}
                  <Links>
                    <Fit w={45}>5 Cells</Fit>
                    <Fit w={79}>11 I/O Ports</Fit>
                    <Fit w={51}>15 Nets</Fit>
                  </Links>
                  <Gear />
                </SchToolbar>
                <Schematic />
              </Editor>
              <BottomTabs>
                <BottomTab><Fit w={76}>Tcl Console</Fit></BottomTab>
                <BottomTab><Fit w={65}>Messages</Fit></BottomTab>
                <BottomTab><Fit w={25.5}>Log</Fit></BottomTab>
                <BottomTab><Fit w={52}>Reports</Fit></BottomTab>
                <BottomTab><Fit w={82.5}>Design Runs</Fit></BottomTab>
              </BottomTabs>
            </Center>
          </Workspace>
        </Main>
      </Body>
      <StatusStrip />

      <Taskbar>
        <News>
          <NewsIcon />
          <TwoLines $second="#c8caca">
            <Fit w={98} dy={-2}>Breaking news</Fit>
            <Fit w={115} dy={-2}>Admiral Dinesh...</Fit>
          </TwoLines>
        </News>
        <WinLogo />
        <SearchPill>
          <Svg w={18} h={18}>
            <circle cx="7.500" cy="7.500" r="6.300" fill="none" stroke="#e6e6e6" strokeWidth="2" />
            <path d="M12 12l5 5" stroke="#e6e6e6" strokeWidth="2.200" />
          </Svg>
          <Fit w={53} dy={0}>Search</Fit>
          <Flowers />
        </SearchPill>
        <Apps>
          {APPS.map(([icon, run, on], i) => <AppSlot key={i} $run={run} $on={on}>{icon}</AppSlot>)}
        </Apps>
        <Tray>
          <TraySlot $r={23}><Chevron dir="up" w={14} h={8} c="#fff" sw={1.8} /></TraySlot>
          <TraySlot $r={20}><Cloud /></TraySlot>
          <TraySlot $r={24}><Dropbox /></TraySlot>
          <TraySlot $r={22}>
            <TwoLines $align="center"><Fit w={30}>ENG</Fit><Fit w={16}>IN</Fit></TwoLines>
          </TraySlot>
          <TraySlot $r={10}><Wifi /></TraySlot>
          <TraySlot $r={10}><Volume /></TraySlot>
          <TraySlot $r={20}><Battery /></TraySlot>
          <TraySlot $r={10}>
            <TwoLines $align="flex-end"><Fit w={37.5} dy={-2}>17:55</Fit><Fit w={78.5} dy={-2}>19-04-2024</Fit></TwoLines>
          </TraySlot>
          <TraySlot $r={21}><Bell /></TraySlot>
          <Copilot />
        </Tray>
      </Taskbar>
    </Screen>
  );
}
